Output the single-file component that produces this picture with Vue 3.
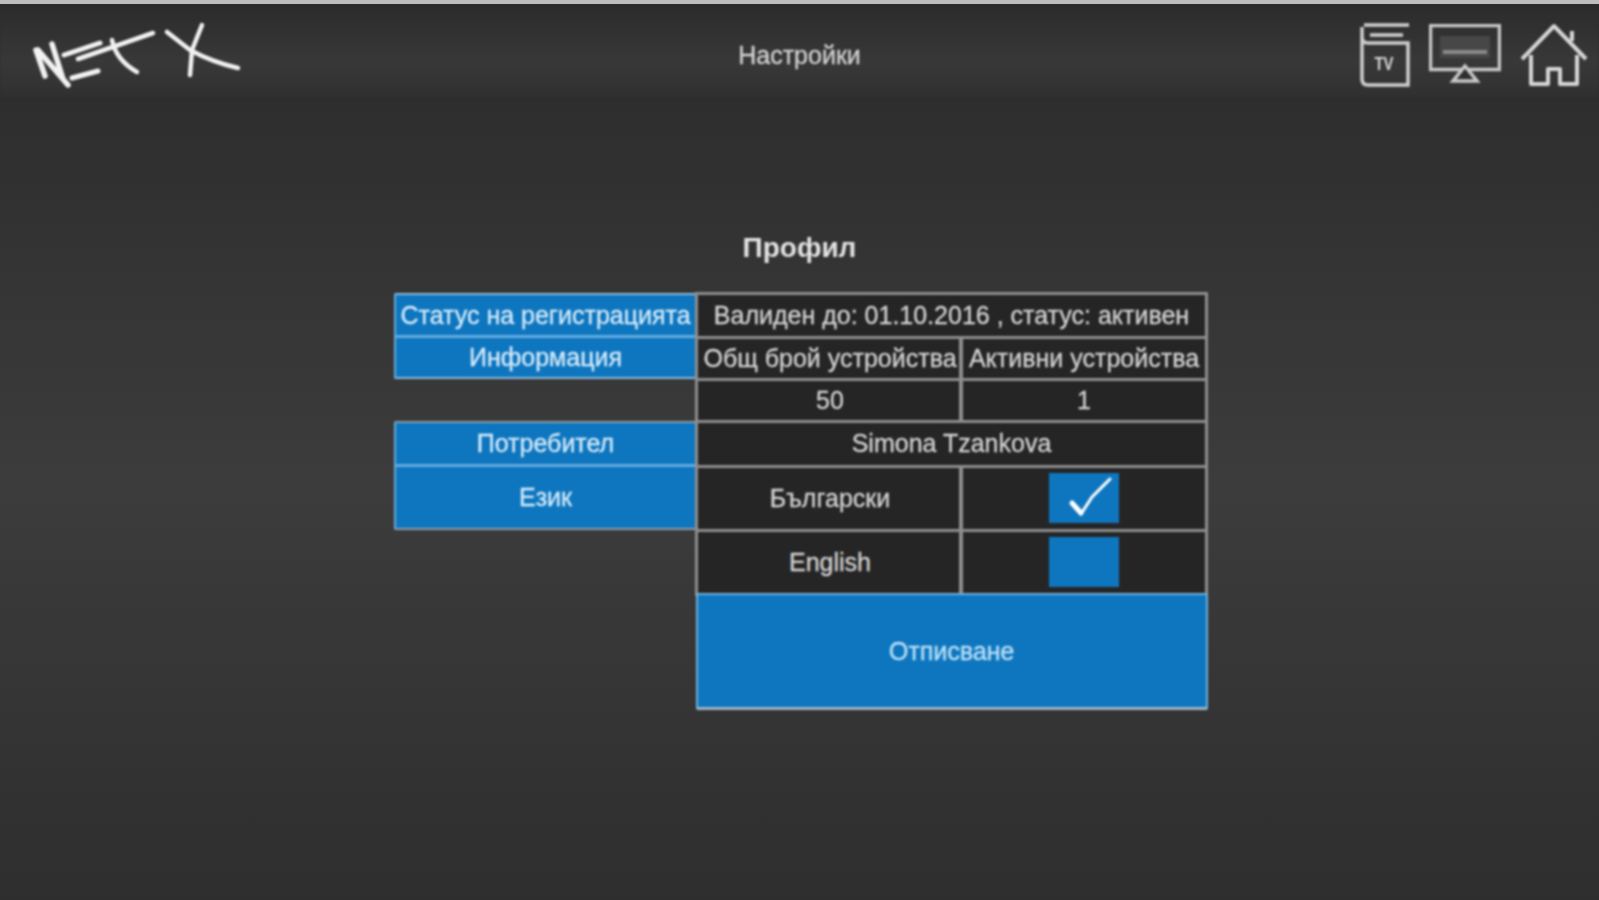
<script setup>
const title = 'Настройки'
</script>

<template>
  <div class="page">
    <header class="bar">
      <svg class="logo" viewBox="0 0 260 100" width="260" height="100" fill="none" stroke="#f2f2f2" stroke-linecap="round" stroke-linejoin="round" aria-label="Net X">
        <path stroke-width="5.5" d="M36 50L45 76M38 50L68 85M52 44L63 79" />
        <path stroke-width="5" d="M64 55L100 43M72 78L98 71" />
        <path stroke-width="4.5" d="M78 59L153 33M112 40Q116 60 137 72" />
        <path stroke-width="4.5" d="M167 32L190 50Q212 62 238 68M202 25L192 50L190 75" />
      </svg>
      <div class="title">{{ title }}</div>
      <div class="icons">
        <svg class="icon-book" viewBox="0 0 52 66" width="52" height="66" fill="none" stroke="#cfcfcf" stroke-width="3.5">
          <path d="M5 4H50M11 14H44M3 6V58Q3 64 9 64H49V22H9Q3 22 3 16" />
          <text x="25" y="49" text-anchor="middle" class="tv" textLength="19" lengthAdjust="spacingAndGlyphs">TV</text>
        </svg>
        <svg class="icon-screen" viewBox="0 0 72 60" width="72" height="60" fill="none" stroke="#c8c8c8" stroke-width="3.5">
          <rect x="1.5" y="1.5" width="69" height="44" />
          <rect x="11" y="12" width="50" height="22" fill="#474747" stroke="none" />
          <path d="M14 28H58" stroke="#8a8a8a" stroke-width="4" />
          <path d="M36 42L48 57H24Z" fill="#2e2e2e" />
        </svg>
        <svg class="icon-home" viewBox="0 0 68 64" width="68" height="64" fill="none" stroke="#d6d6d6" stroke-width="4" stroke-linejoin="round">
          <path d="M2 36L34 3L66 36M52 18V8M11 32V61H28V46H40V61H57V32" />
        </svg>
      </div>
    </header>

    <main class="content">
      <h1 class="heading">Профил</h1>
      <div class="table">
        <div class="cell head r-status">Статус на регистрацията</div>
        <div class="cell dark wide">Валиден до: 01.10.2016 , статус: активен</div>

        <div class="cell head r-info">Информация</div>
        <div class="cell dark c2">Общ брой устройства</div>
        <div class="cell dark">Активни устройства</div>

        <div class="gap"></div>
        <div class="cell dark c2">50</div>
        <div class="cell dark">1</div>

        <div class="cell head r-user">Потребител</div>
        <div class="cell dark wide">Simona Tzankova</div>

        <div class="cell head r-lang">Език</div>
        <div class="cell dark c2">Български</div>
        <div class="cell dark">
          <span class="check">
            <svg viewBox="0 0 70 50" width="70" height="50" fill="none" stroke="#fff" stroke-linecap="round" stroke-linejoin="round">
              <path d="M23 30L32 41L43 24L61 6" stroke-width="3" />
              <path d="M23 30L32 40" stroke-width="5" />
            </svg>
          </span>
        </div>

        <div class="gap"></div>
        <div class="cell dark c2">English</div>
        <div class="cell dark"><span class="check"></span></div>

        <div class="gap"></div>
        <div class="cell action wide">Отписване</div>
      </div>
    </main>
  </div>
</template>

<style scoped>
.page {
  width: 1599px;
  height: 900px;
  overflow: hidden;
  box-sizing: border-box;
  border-top: 4px solid #bdbdbd;
  font-family: "Liberation Sans", Arial, sans-serif;
  background: linear-gradient(#2e2e2e 100px, #3c3c3c 480px, #2e2e2e 900px);
  color: #d8d8d8;
}
.page > * {
  filter: blur(1px);
}
.bar {
  height: 96px;
  display: grid;
  grid-template-columns: 1fr auto 1fr;
  align-items: center;
  background: linear-gradient(#2b2b2b, #383838 60%, #333 85%, #2e2e2e);
}
.logo {
  margin-top: -4px;
}
.title {
  font-size: 25px;
  color: #d4d4d4;
  margin-top: 6px;
  -webkit-text-stroke: 0.3px #d4d4d4;
}
.icons {
  justify-self: end;
  display: flex;
  align-items: flex-start;
  margin-right: 11px;
  margin-top: -1px;
}
.icon-book { margin-top: 4px; }
.icon-screen { margin: 7px 0 0 18px; }
.icon-home { margin: 6px 0 0 19px; }
.tv {
  font: bold 18px "Liberation Sans", Arial, sans-serif;
  fill: #d8d8d8;
  stroke: none;
}
.content {
  display: flex;
  flex-direction: column;
  align-items: center;
  padding-top: 128px;
}
.heading {
  margin: 0 0 25px;
  height: 40px;
  line-height: 40px;
  font-size: 28px;
  font-weight: bold;
  color: #e4e4e4;
}
.table {
  display: grid;
  grid-template-columns: 302px 265px 246px;
  grid-template-rows: 44px 42px 42px 45px 64px 64px 116px;
  margin-left: 1px;
  font-size: 25px;
  -webkit-text-stroke: 0.3px currentColor;
}
.cell {
  display: flex;
  align-items: center;
  justify-content: center;
  box-sizing: border-box;
  white-space: nowrap;
}
.wide {
  grid-column: span 2;
}
.c2 {
  padding-left: 3px;
}
.dark {
  background: #252525;
  color: #d4d4d4;
  border: 3px solid #8e8e8e;
  margin: -1.5px -1.5px -1.5px -0.5px;
}
.head {
  background: #0e76bf;
  color: #d6ebfa;
  border: 2px solid #62abde;
  border-right: 0;
}
.r-status { border-top: 2px solid #8cb9d8; border-radius: 2px 0 0 0; }
.r-info { border-top-width: 1px; border-bottom: 2px solid #8cb9d8; border-radius: 0 0 0 2px; }
.r-user { border-top: 2px solid #8c9ca8; border-radius: 2px 0 0 0; }
.r-lang { border-top-width: 1px; border-bottom: 2px solid #8c9ca8; border-radius: 0 0 0 2px; }
.check {
  width: 70px;
  height: 50px;
  background: #0e76bf;
  display: block;
}
.check svg {
  display: block;
}
.action {
  background: #0e76bf;
  color: #bfe0f7;
  border: 2px solid #6fb0dd;
  border-bottom: 3px solid #9fb4c4;
  margin-right: -1px;
  margin-top: -1px;
  border-radius: 2px;
}
</style>
